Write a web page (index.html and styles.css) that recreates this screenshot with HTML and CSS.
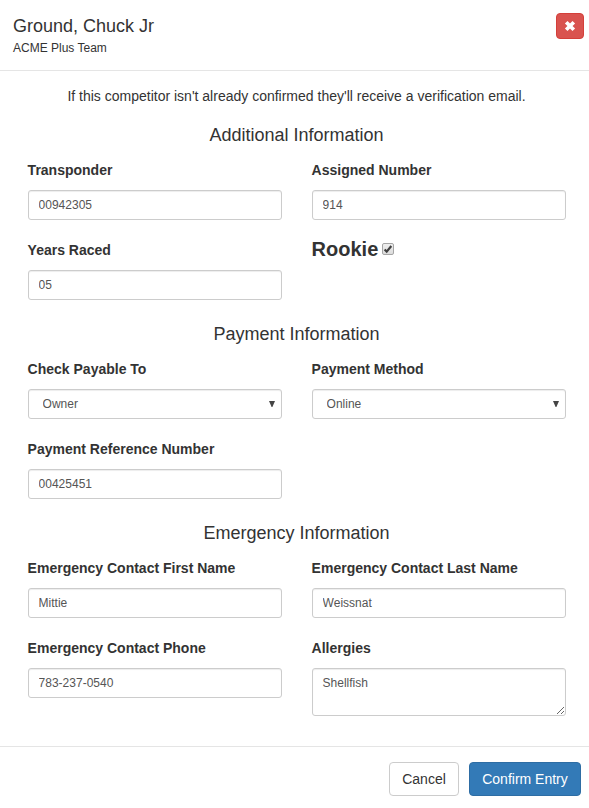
FILE: index.html
```
<!DOCTYPE html>
<html lang="en">
<head>
    <meta charset="UTF-8">
    <title>Confirm Entry</title>
    <link rel="stylesheet" href="styles.css">
</head>
<body>
<form class="modal-content">
    <div class="modal-header">
        <div>
            <h4 class="modal-title">Ground, Chuck Jr</h4>
            <div class="team">ACME Plus Team</div>
        </div>
        <button type="button" class="btn-close" aria-label="Close">
            <svg width="12" height="12" viewBox="0 0 12 12"><path d="M2.2 2.2L9.8 9.8M9.8 2.2L2.2 9.8" stroke="#fff" stroke-width="3.7"/></svg>
        </button>
    </div>

    <div class="modal-body">
        <p class="notice">If this competitor isn't already confirmed they'll receive a verification email.</p>

        <h4>Additional Information</h4>
        <div class="row">
            <div class="form-group">
                <label for="transponder">Transponder</label>
                <input type="text" class="form-control" id="transponder" value="00942305">
            </div>
            <div class="form-group">
                <label for="number">Assigned Number</label>
                <input type="text" class="form-control" id="number" value="914">
            </div>
            <div class="form-group">
                <label for="years">Years Raced</label>
                <input type="text" class="form-control" id="years" value="05">
            </div>
            <div class="form-group rookie">
                <label for="rookie">Rookie</label>
                <span class="check">
                    <input type="checkbox" id="rookie" checked>
                    <svg width="12" height="12" viewBox="0 0 12 12"><path d="M2.6 6.4L4.7 8.6L9.3 3" fill="none" stroke="#404040" stroke-width="2.2"/></svg>
                </span>
            </div>
        </div>

        <h4>Payment Information</h4>
        <div class="row">
            <div class="form-group">
                <label for="payable">Check Payable To</label>
                <div class="select">
                    <select class="form-control" id="payable"><option>Owner</option></select>
                    <svg width="6" height="6" viewBox="0 0 6 6"><path d="M0 0H6L3.4 6H2.6Z" fill="#444"/></svg>
                </div>
            </div>
            <div class="form-group">
                <label for="method">Payment Method</label>
                <div class="select">
                    <select class="form-control" id="method"><option>Online</option></select>
                    <svg width="6" height="6" viewBox="0 0 6 6"><path d="M0 0H6L3.4 6H2.6Z" fill="#444"/></svg>
                </div>
            </div>
            <div class="form-group">
                <label for="reference">Payment Reference Number</label>
                <input type="text" class="form-control" id="reference" value="00425451">
            </div>
        </div>

        <h4>Emergency Information</h4>
        <div class="row">
            <div class="form-group">
                <label for="first">Emergency Contact First Name</label>
                <input type="text" class="form-control" id="first" value="Mittie">
            </div>
            <div class="form-group">
                <label for="last">Emergency Contact Last Name</label>
                <input type="text" class="form-control" id="last" value="Weissnat">
            </div>
            <div class="form-group">
                <label for="phone">Emergency Contact Phone</label>
                <input type="text" class="form-control" id="phone" value="783-237-0540">
            </div>
            <div class="form-group">
                <label for="allergies">Allergies</label>
                <textarea class="form-control" id="allergies">Shellfish</textarea>
            </div>
        </div>
    </div>

    <div class="modal-footer">
        <button type="button" class="btn btn-default">Cancel</button>
        <button type="button" class="btn btn-primary">Confirm Entry</button>
    </div>
</form>
</body>
</html>
```
FILE: styles.css
```
* { box-sizing: border-box; }
body { margin: 0; background: #fff; color: #333; font-family: "Liberation Sans", Arial, sans-serif; font-size: 14px; line-height: 20px; overflow: hidden; }
h4 { margin: 0; font-size: 18px; font-weight: 400; line-height: 20px; }
button, input, select, textarea { font-family: inherit; }

.modal-header { display: flex; justify-content: space-between; align-items: flex-start; height: 71px; padding: 13px 5px 0 13px; border-bottom: 1px solid #e5e5e5; }
.modal-title { line-height: 26px; }
.team { font-size: 12px; line-height: 19px; }
.btn-close { display: flex; align-items: center; justify-content: center; width: 28px; height: 26px; padding: 0; background: #d9534f; border: 1px solid #d43f3a; border-radius: 4px; }

.modal-body { padding: 15px 23px 10px 28px; }
.notice { margin: 0 0 19px; padding-right: 1px; text-align: center; }
.modal-body h4 { margin-bottom: 15px; padding-right: 1px; text-align: center; }
.row { display: grid; grid-template-columns: 254px 254px; column-gap: 30px; row-gap: 20px; margin-bottom: 24px; }
.row:last-child { margin-bottom: 0; }

.form-group label { display: block; margin-bottom: 10px; font-weight: 700; text-indent: -0.4px; }
.form-control { display: block; width: 100%; height: 30px; padding: 5px 10px 5px 9.6px; font-size: 12px; line-height: 18px; color: #555; background: #fff; border: 1px solid #ccc; border-radius: 3px; box-shadow: inset 0 1px 1px rgba(0,0,0,.075); }
textarea.form-control { height: 48px; resize: vertical; overflow: hidden; }
.select { position: relative; }
.select select { appearance: none; padding-left: 13.6px; }
.select svg { position: absolute; right: 7px; top: 12px; }

.rookie { display: flex; align-items: center; gap: 4px; height: 18px; }
.form-group.rookie label { margin: 0; font-size: 20px; }
.check { position: relative; width: 12px; height: 12px; }
.check input { appearance: none; display: block; width: 12px; height: 12px; margin: 0; border: 1px solid #a5a5a5; border-radius: 2px; background: linear-gradient(#eee, #dcdcdc); }
.check svg { position: absolute; left: 0; top: 0; }

.modal-footer { display: flex; justify-content: flex-end; gap: 10px; padding: 15px 8px 12px; margin-top: 20px; border-top: 1px solid #e5e5e5; }
.btn { height: 34px; padding: 6px 12px; font-size: 14px; line-height: 20px; border: 1px solid #ccc; border-radius: 4px; }
.btn-default { width: 70px; color: #333; background: #fff; }
.btn-primary { width: 112px; color: #fff; background: #337ab7; border-color: #2e6da4; }
```
